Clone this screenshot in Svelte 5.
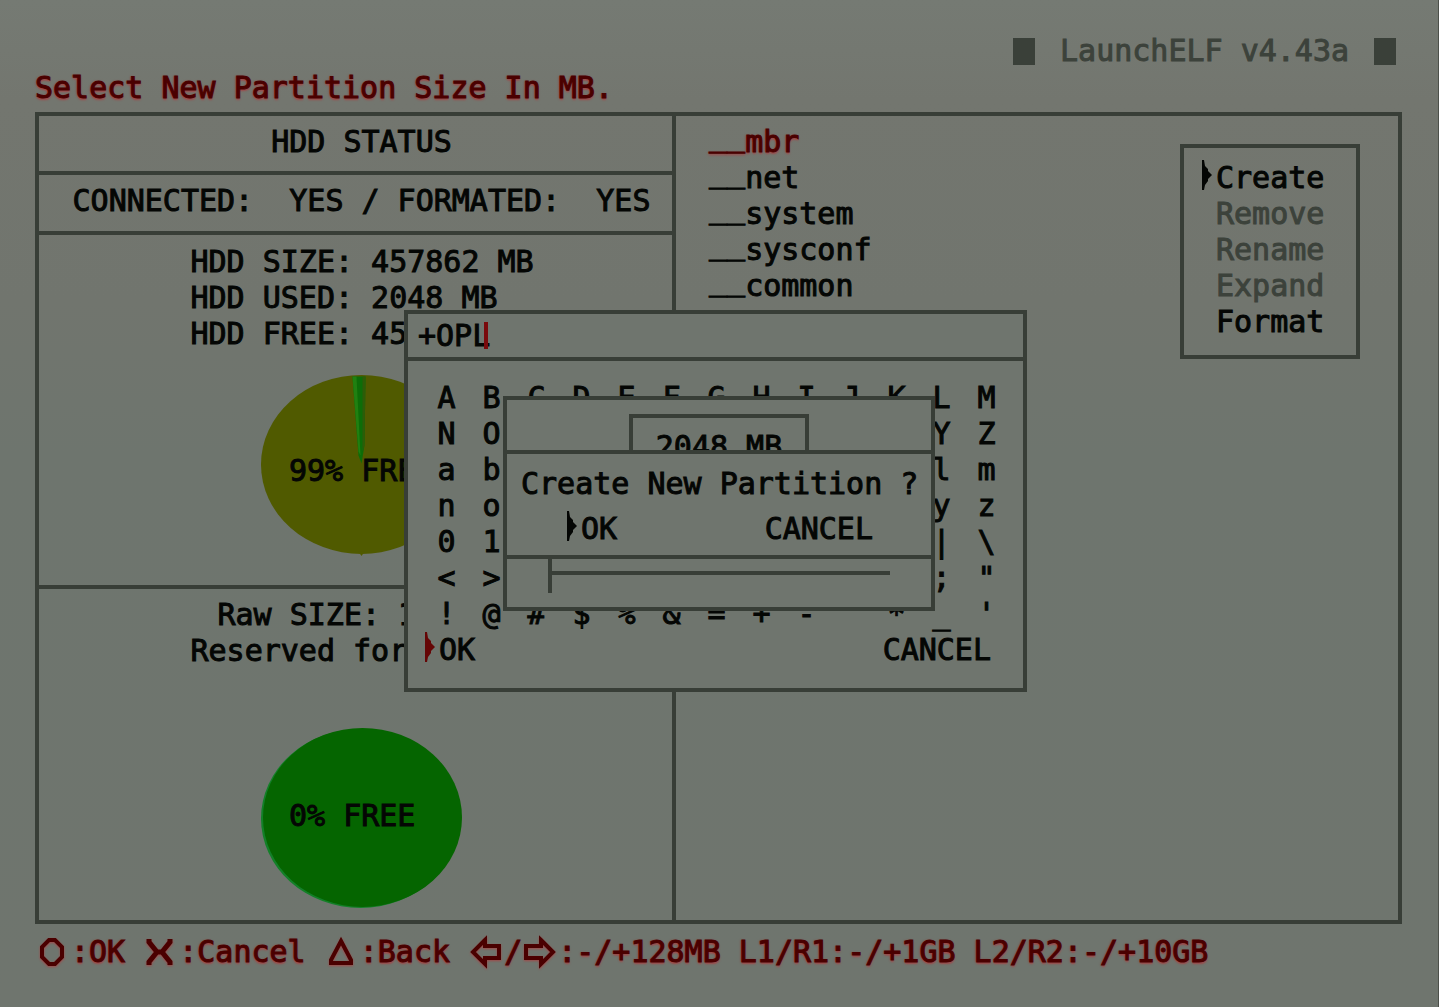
<script>
  const partitions = ['mbr', 'net', 'system', 'sysconf', 'common'];
  const actions = [
    { label: 'Create', enabled: true },
    { label: 'Remove', enabled: false },
    { label: 'Rename', enabled: false },
    { label: 'Expand', enabled: false },
    { label: 'Format', enabled: true }
  ];
  const keys = [
    'ABCDEFGHIJKLM',
    'NOPQRSTUVWXYZ',
    'abcdefghijklm',
    'nopqrstuvwxyz',
    '0123456789 |\\',
    '<>(){}[].,:;"',
    "!@#$%&=+-^*_'"
  ].flatMap((row) => [...row]);

  let selected = $state('mbr');
  let name = $state('+OPL');
  let size = $state(2048);
</script>

{#snippet pointer()}
  <svg class="pointer" viewBox="0 0 10 30" aria-hidden="true">
    <path d="M0 0H2L3 6L6 9V11L10 15L6 19V21L3 25L2 30H0Z" />
  </svg>
{/snippet}

<div class="page">
  <header>
    <i></i>
    <h1>LaunchELF v4.43a</h1>
    <i></i>
  </header>
  <p class="message">Select New Partition Size In MB.</p>

  <main>
    <section class="status">
      <h2>HDD STATUS</h2>
      <p class="line">CONNECTED:  YES / FORMATED:  YES</p>
      <div class="disk">
        <div class="figures">
          <p>HDD SIZE: 457862 MB</p>
          <p>HDD USED: 2048 MB</p>
          <p>HDD FREE: 455814 MB</p>
        </div>
        <div class="pie">
          <svg viewBox="0 0 200 180" aria-hidden="true">
            <ellipse cx="100" cy="89" rx="100" ry="89" fill="#505a00" />
            <path d="M97 176h6l-3 4z" fill="#505a00" />
            <path d="M91 1.5L104 1.5L103 70L100 88L97 80Z" fill="#0d6d08" />
            <path d="M91 1.5H95L99 80L97 76Z" fill="#208011" />
            <path d="M101 1.5H104L103 70L101 76Z" fill="#2d5c08" />
          </svg>
          <span class="low">99% FREE</span>
        </div>
      </div>
      <div class="disk raw">
        <div class="figures">
          <p class="indent">Raw SIZE: 1</p>
          <p>Reserved for</p>
        </div>
        <div class="pie">
          <svg viewBox="0 0 200 180" aria-hidden="true">
            <ellipse cx="99" cy="90" rx="99" ry="89" fill="#138028" />
            <ellipse cx="101" cy="89" rx="99" ry="89" fill="#056500" />
          </svg>
          <span>0% FREE</span>
        </div>
      </div>
    </section>

    <section class="browser">
      <ul>
        {#each partitions as part}
          <li>
            <button class:active={selected === part} onclick={() => (selected = part)}>
              <span class="under">__</span>{part}
            </button>
          </li>
        {/each}
      </ul>
      <menu>
        {#each actions as action, i}
          <li>
            <span class="mark">{#if i === 0}{@render pointer()}{/if}</span>
            <button disabled={!action.enabled}>{action.label}</button>
          </li>
        {/each}
      </menu>
    </section>
  </main>

  <footer>
    <svg viewBox="0 0 36 36" aria-label="Circle"><path d="M14 6H20L27 13V23L20 30H14L7 23V13Z" /></svg>
    <span>{':OK '}</span>
    <svg class="bold" viewBox="0 0 36 36" aria-label="Cross"><path d="M6 5V8L14 18L6 28V31M27 5V8L19 18L27 28V31M14 18H19" /></svg>
    <span>{':Cancel '}</span>
    <svg viewBox="0 0 36 36" aria-label="Triangle"><path d="M17 7L27 26V29H7V26Z" /></svg>
    <span>{':Back '}</span>
    <svg viewBox="0 0 36 36" aria-label="Left"><path d="M17 6L5 18L17 30V24H31V12H17Z" /></svg>
    <span>/</span>
    <svg viewBox="0 0 36 36" aria-label="Right"><path d="M19 6L31 18L19 30V24H4V12H19Z" /></svg>
    <span>:-/+128MB L1/R1:-/+1GB L2/R2:-/+10GB</span>
  </footer>

  <div class="keyboard" role="dialog" aria-label="Partition name">
    <div class="field">
      <input type="text" aria-label="Name" bind:value={name} />
      <span class="caret"></span>
    </div>
    <div class="keys">
      {#each keys as key}
        <button onclick={() => (name += key)}>{key}</button>
      {/each}
    </div>
    <div class="choices">
      <span class="mark red">{@render pointer()}</span>
      <button>OK</button>
      <button class="last">CANCEL</button>
    </div>

    <div class="sizer" role="dialog" aria-label="Partition size">
      <output>{size} MB</output>
      <input type="range" aria-label="Size" min="2048" max="131072" step="128" bind:value={size} />
    </div>

    <div class="confirm" role="alertdialog" aria-label="Confirm">
      <p>Create New Partition ?</p>
      <div class="answers">
        <span class="mark">{@render pointer()}</span>
        <button>OK</button>
        <button class="last">CANCEL</button>
      </div>
    </div>
  </div>
</div>

<style>
  :global(body) {
    margin: 0;
  }
  .page {
    --bg: #6f756e;
    --line: #383e37;
    --ink: #040604;
    --red: #4a0000;
    position: relative;
    box-sizing: border-box;
    display: flex;
    flex-direction: column;
    min-height: 100vh;
    padding: 33px 36px 37px 35px;
    border-right: 1px solid #4c504a;
    background: linear-gradient(#757a73, #73766f 10%, #71756e 30%, #6e756e 45%, #6f756e);
    color: var(--ink);
    font: 30px/36px 'DejaVu Sans Mono', 'Liberation Mono', monospace;
    -webkit-text-stroke: 1px currentColor;
  }
  h1, h2, p, ul, menu {
    margin: 0;
    padding: 0;
    font: inherit;
    list-style: none;
  }
  p, span, button {
    white-space: pre;
  }
  button, input {
    margin: 0;
    padding: 0;
    border: 0;
    background: none;
    color: inherit;
    font: inherit;
    -webkit-text-stroke: inherit;
    text-align: left;
    text-shadow: inherit;
    outline: none;
  }
  button {
    display: block;
  }
  header {
    display: flex;
    justify-content: flex-end;
    align-items: center;
    gap: 25px;
    padding-right: 6px;
    color: #3c423b;
  }
  header i {
    width: 22px;
    height: 27px;
    background: #3a4039;
  }
  .message, footer, .active {
    color: var(--red);
    text-shadow: 0 2px 2px #a04848, -1px 0 2px #8a4040;
  }
  .message {
    margin-top: 1px;
  }
  main {
    flex: 1;
    display: grid;
    grid-template-columns: 637fr 722fr;
    margin: 6px 0 10px;
    border: 4px solid var(--line);
  }
  .status {
    display: flex;
    flex-direction: column;
    border-right: 4px solid var(--line);
  }
  h2, .line {
    padding: 8px 0 11px 12px;
    border-bottom: 4px solid var(--line);
    text-align: center;
  }
  .line {
    padding-bottom: 12px;
  }
  .disk {
    display: flex;
    flex-direction: column;
    align-items: center;
    gap: 23px;
    padding: 9px 0 29px 12px;
    border-bottom: 4px solid var(--line);
  }
  .raw {
    gap: 59px;
    padding-top: 8px;
    padding-bottom: 0;
    border: 0;
  }
  .figures {
    width: 342px;
  }
  .indent {
    padding-left: 27px;
  }
  .pie {
    display: grid;
    align-items: center;
    width: 201px;
  }
  .pie > * {
    grid-area: 1 / 1;
  }
  .pie svg {
    display: block;
    width: 100%;
  }
  .pie span {
    padding: 0 0 4px 28px;
  }
  .pie .low {
    padding: 11px 0 0 28px;
  }
  .browser {
    display: flex;
    justify-content: space-between;
    align-items: flex-start;
    padding: 8px 38px 0 33px;
  }
  .under {
    line-height: 0;
    vertical-align: 6px;
  }
  menu {
    box-sizing: border-box;
    width: 180px;
    margin-top: 20px;
    padding: 12px 0 15px 18px;
    border: 4px solid var(--line);
  }
  menu li, .choices, .answers {
    display: flex;
    align-items: center;
  }
  .mark {
    width: 14px;
    height: 36px;
  }
  .pointer {
    display: block;
    width: 10px;
    height: 30px;
    fill: currentColor;
  }
  .red {
    color: #650606;
  }
  button:disabled {
    color: #3c423b;
  }
  footer {
    display: flex;
  }
  footer svg {
    flex: none;
    width: 36px;
    height: 36px;
    fill: none;
    stroke: currentColor;
    stroke-width: 4;
    filter: drop-shadow(0 1px 1px #a04848);
  }
  footer .bold {
    stroke-width: 5;
  }
  .keyboard {
    position: absolute;
    top: 310px;
    left: 404px;
    box-sizing: border-box;
    width: 623px;
    border: 4px solid var(--line);
    background: var(--bg);
  }
  .field {
    position: relative;
    display: flex;
    padding: 4px 10px 3px;
    border-bottom: 4px solid var(--line);
  }
  .field input {
    flex: 1;
    height: 36px;
  }
  .caret {
    position: absolute;
    top: 8px;
    left: 76px;
    width: 4px;
    height: 27px;
    background: #7a0a0c;
  }
  .keys {
    display: grid;
    grid-template-columns: repeat(13, 1fr);
    padding: 19px 14px 0 16px;
  }
  .keys button {
    height: 36px;
    text-align: center;
  }
  .choices {
    padding: 0 32px 20px 17px;
  }
  .last {
    margin-left: auto;
  }
  .sizer {
    position: absolute;
    top: 82px;
    left: 95px;
    box-sizing: border-box;
    display: flex;
    flex-direction: column;
    align-items: center;
    justify-content: space-between;
    width: 432px;
    height: 215px;
    padding: 14px 0;
    border: 4px solid var(--line);
    background: var(--bg);
  }
  output {
    padding: 11px 23px;
    border: 4px solid var(--line);
  }
  .sizer input {
    appearance: none;
    width: 342px;
    height: 40px;
    background: linear-gradient(var(--line), var(--line)) center / 100% 4px no-repeat;
  }
  .sizer input::-webkit-slider-thumb {
    appearance: none;
    width: 4px;
    height: 40px;
    background: var(--line);
  }
  .confirm {
    position: absolute;
    top: 136px;
    left: 95px;
    box-sizing: border-box;
    width: 432px;
    padding: 12px 14px 8px;
    border: 4px solid var(--line);
    background: var(--bg);
  }
  .answers {
    padding: 9px 44px 0 46px;
  }
</style>
